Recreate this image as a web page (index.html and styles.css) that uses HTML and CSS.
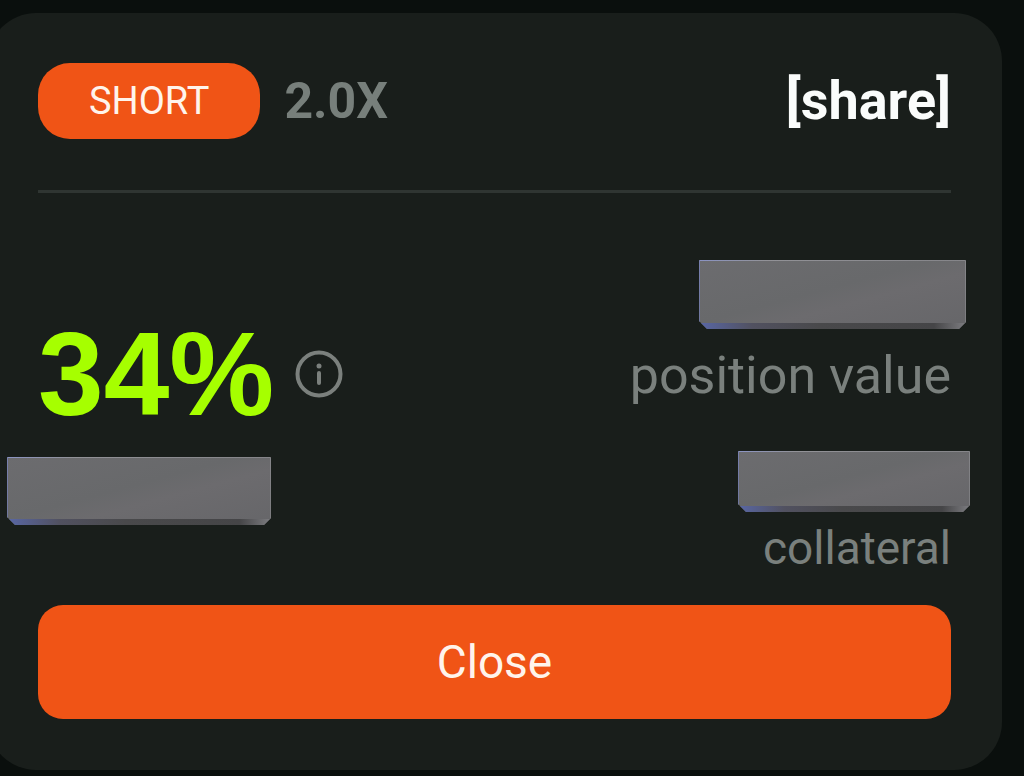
FILE: index.html
```html
<!DOCTYPE html>
<html lang="en">
<head>
<meta charset="utf-8">
<meta name="viewport" content="width=device-width, initial-scale=1">
<title>Position</title>
<link rel="stylesheet" href="styles.css">
</head>
<body>
<main class="card">
  <header class="card-header">
    <span class="side">SHORT</span>
    <span class="leverage">2.0X</span>
    <button class="share" type="button">[share]</button>
  </header>
  <section class="stats">
    <div class="pnl">
      <div class="pnl-row">
        <span class="percent">34%</span>
        <button class="info" type="button" aria-label="Info">
          <svg class="info-icon" viewBox="0 0 48 48" fill="none" stroke="currentColor" aria-hidden="true">
            <circle cx="24" cy="24" r="21.5" stroke-width="4"/>
            <path d="M24 23V33" stroke-width="4" stroke-linecap="round"/>
            <circle cx="24" cy="16" r="2.5" fill="currentColor" stroke="none"/>
          </svg>
        </button>
      </div>
      <div class="slab slab-pnl"></div>
    </div>
    <div class="amounts">
      <div class="slab slab-value"></div>
      <span class="label label-value">position value</span>
      <div class="slab slab-collateral"></div>
      <span class="label label-collateral">collateral</span>
    </div>
  </section>
  <button class="close" type="button">Close</button>
</main>
</body>
</html>
```
FILE: styles.css
```css
* {
  box-sizing: border-box;
}

body {
  margin: 0;
  padding: 13px 22px 6px 0;
  background: #0a0f0d;
  font-family: Roboto, "Liberation Sans", sans-serif;
  overflow-x: hidden;
}

button {
  border: 0;
  padding: 0;
  background: none;
  font-family: inherit;
  cursor: pointer;
}

.card {
  margin-left: -12px;
  padding: 50px 51px 51px 50px;
  border-radius: 48px;
  background: #191e1b;
}

.card-header {
  display: flex;
  align-items: center;
  gap: 24px;
  padding-bottom: 51px;
  border-bottom: 3px solid #2f3532;
}

.side {
  padding: 0 51px;
  border-radius: 32px;
  background: #f05416;
  color: #fff4ec;
  font-size: 38px;
  line-height: 76px;
}

.leverage {
  color: #777f7b;
  font-size: 50px;
  font-weight: 700;
  line-height: 76px;
}

.share {
  margin-left: auto;
  color: #fafcfb;
  font-size: 54px;
  font-weight: 700;
  line-height: 76px;
}

.stats {
  display: flex;
  justify-content: space-between;
}

.pnl {
  padding-top: 121px;
}

.pnl-row {
  display: flex;
  align-items: center;
  gap: 21px;
}

.percent {
  color: #a6ff00;
  font-family: "Liberation Sans", Arial, sans-serif;
  font-size: 118px;
  font-weight: 700;
  line-height: 120px;
}

.info {
  display: flex;
  color: #7b807d;
}

.info-icon {
  width: 48px;
  height: 48px;
}

.amounts {
  display: flex;
  flex-direction: column;
  align-items: flex-end;
  padding-top: 67px;
}

.label {
  color: #7a807d;
  line-height: 60px;
}

.label-value {
  margin: 17px 0 45px;
  font-size: 52px;
}

.label-collateral {
  margin-top: 6px;
  font-size: 46px;
}

.slab {
  background:
    linear-gradient(90deg, #8b94c4, #929297 25%, #858589) top / 100% 1px no-repeat,
    linear-gradient(90deg, #5967a5, #515160 20%, #49494b 45%, #454547 88%, #7d7d81) bottom / 100% 6px no-repeat,
    linear-gradient(#777fae, #6e759a) left / 1px 100% no-repeat,
    linear-gradient(#858589, #7b7b7e) right / 1px 100% no-repeat,
    linear-gradient(165deg, #6c6c6f, #68696b 45%, #6c6b6e 60%, #666669);
  clip-path: polygon(0 1px, 1px 0, calc(100% - 1px) 0, 100% 1px, 100% calc(100% - 7px), calc(100% - 7px) 100%, 8px 100%, 0 calc(100% - 8px));
}

.slab-value {
  width: 267px;
  height: 69px;
  margin-right: -15px;
}

.slab-collateral {
  width: 232px;
  height: 61px;
  margin-right: -19px;
}

.slab-pnl {
  width: 264px;
  height: 68px;
  margin: 23px 0 0 -31px;
}

.close {
  display: block;
  width: 100%;
  margin-top: 27px;
  border-radius: 25px;
  background: #f05416;
  color: #fff4ec;
  font-size: 46px;
  line-height: 114px;
}
```
